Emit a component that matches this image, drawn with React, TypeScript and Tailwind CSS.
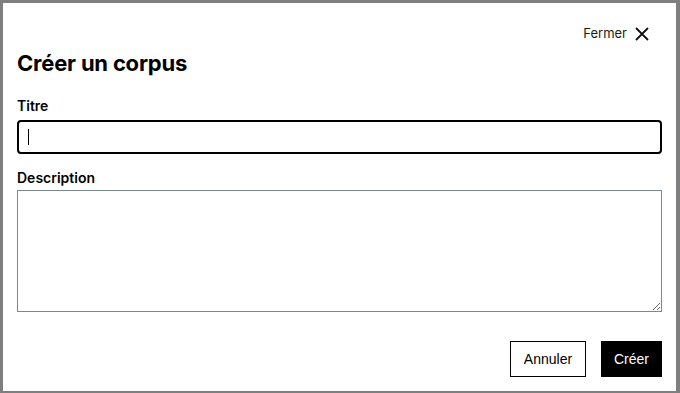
import React from 'react';

export default function App() {
  return (
    <div className="w-[680px] h-[393px] bg-[#7f7f7f] pl-[3px] pt-[3px] pr-[4px] pb-[2px] overflow-hidden">
      <div
        className="h-full bg-white pl-[14px] pr-[14px] pt-[20px] text-black"
        style={{ fontFamily: 'Inter, "Noto Sans", sans-serif' }}
      >
        <div className="flex justify-end pr-[12px]">
          <button className="flex items-center h-[22px] gap-[7px] text-[13px] text-[#1a1a1a]">
            <span>Fermer</span>
            <svg width="16" height="16" viewBox="0 0 16 16" fill="none" stroke="#111" strokeWidth="1.8">
              <path d="M2 2L14 14M14 2L2 14" />
            </svg>
          </button>
        </div>
        <h1 className="mt-[4px] text-[22px] leading-[28px] font-bold tracking-[-0.2px]">Créer un corpus</h1>

        <label className="block mt-[19px] text-[14px] leading-[20px] font-semibold">Titre</label>
        <div className="mt-[4px] h-[34px] border-2 border-black rounded-[4px] flex items-center pl-[9px]">
          <span className="w-[1px] h-[16px] bg-black" />
        </div>

        <label className="block mt-[14px] text-[14px] leading-[20px] font-semibold">Description</label>
        <textarea className="block mt-[2px] w-full h-[122px] border border-[#7d8790] resize-y outline-none" />

        <div
          className="flex justify-end gap-[15px] mt-[29px]"
          style={{ fontFamily: '"Liberation Sans", Arial, sans-serif' }}
        >
          <button className="h-[36px] w-[76px] border border-black bg-white text-[14px] text-black">Annuler</button>
          <button className="h-[36px] w-[61px] bg-black text-[14px] text-white">Créer</button>
        </div>
      </div>
    </div>
  );
}
